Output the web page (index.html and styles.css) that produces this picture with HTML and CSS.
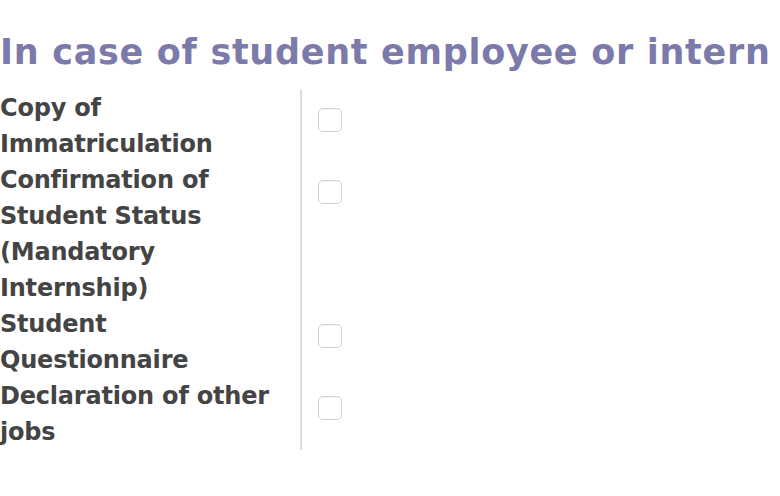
FILE: index.html
```html
<!DOCTYPE html>
<html>
<head>
<meta charset="utf-8">
<link rel="stylesheet" href="styles.css">
</head>
<body>
<h2 class="title">In case of student employee or intern</h2>
<div class="docs">
  <div class="row">
    <div class="label">Copy of Immatriculation</div>
    <div class="check"><span class="box"></span></div>
  </div>
  <div class="row">
    <div class="label">Confirmation of Student Status (Mandatory Internship)</div>
    <div class="check"><span class="box"></span></div>
  </div>
  <div class="row">
    <div class="label">Student Questionnaire</div>
    <div class="check"><span class="box"></span></div>
  </div>
  <div class="row">
    <div class="label">Declaration of other jobs</div>
    <div class="check"><span class="box"></span></div>
  </div>
</div>
</body>
</html>
```
FILE: styles.css
```css
html, body {
  margin: 0;
  padding: 0;
  background: #ffffff;
}
body {
  font-family: "DejaVu Sans", "Liberation Sans", sans-serif;
  overflow: hidden;
}
.title {
  margin: 0;
  padding-top: 28px;
  height: 90px;
  box-sizing: border-box;
  font-size: 35px;
  line-height: 48px;
  font-weight: bold;
  color: #7b7aab;
  white-space: nowrap;
  letter-spacing: 0.7px;
}
.docs {
  display: flex;
  flex-direction: column;
  width: 300px;
  border-right: 2px solid #dcdcdc;
}
.row {
  display: flex;
}
.label {
  width: 280px;
  padding-right: 20px;
  font-size: 24px;
  line-height: 36px;
  font-weight: bold;
  color: #444444;
  letter-spacing: -0.2px;
}
.check {
  position: relative;
  width: 0;
}
.box {
  position: absolute;
  left: 18px;
  top: 18px;
  width: 22px;
  height: 22px;
  border: 1px solid #d2d2d2;
  border-radius: 5px;
  background: #fff;
  box-shadow: inset 0 1px 1px rgba(0,0,0,0.04);
}
```
